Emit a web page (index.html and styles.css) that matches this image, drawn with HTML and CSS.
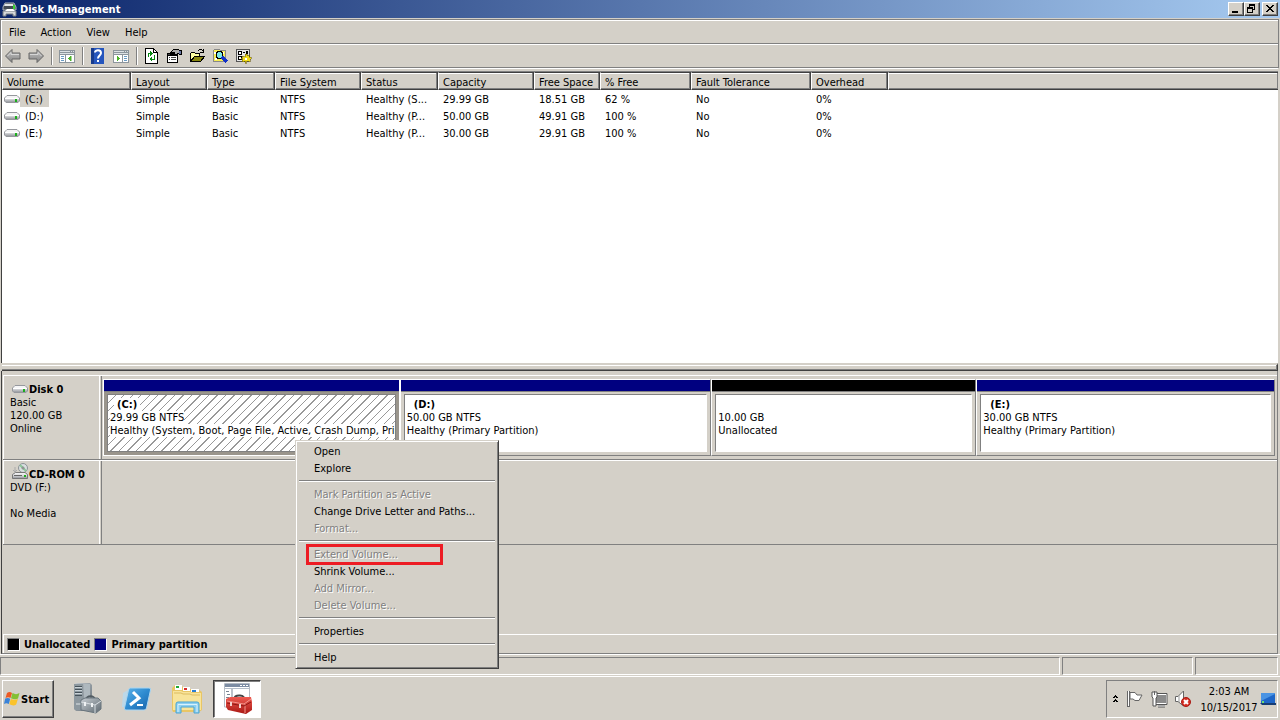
FILE: index.html
```html
<!DOCTYPE html>
<html lang="en">
<head>
<meta charset="utf-8">
<meta name="viewport" content="width=device-width, initial-scale=1">
<title>Disk Management</title>
<link rel="stylesheet" href="styles.css">
</head>
<body>
<svg class="defs" width="0" height="0" aria-hidden="true">
  <defs>
    <linearGradient id="metal" x1="0" y1="0" x2="0" y2="1"><stop offset="0" stop-color="#fafafa"/><stop offset=".5" stop-color="#d8d9dc"/><stop offset="1" stop-color="#8d9096"/></linearGradient>
    <linearGradient id="steel" x1="0" y1="0" x2="1" y2="1"><stop offset="0" stop-color="#c8ced3"/><stop offset="1" stop-color="#5d6870"/></linearGradient>
    <linearGradient id="arrow" x1="0" y1="0" x2="0" y2="1"><stop offset="0" stop-color="#c4c4c4"/><stop offset="1" stop-color="#858585"/></linearGradient>
    <linearGradient id="blue" x1="0" y1="0" x2="1" y2="1"><stop offset="0" stop-color="#5fb4ea"/><stop offset=".5" stop-color="#2e8bd0"/><stop offset="1" stop-color="#1a62a8"/></linearGradient>
    <linearGradient id="red" x1="0" y1="0" x2="0" y2="1"><stop offset="0" stop-color="#ee5a50"/><stop offset="1" stop-color="#a81612"/></linearGradient>
    <symbol id="drive" viewBox="0 0 16 10">
      <path d="M3 1.500H13L15.500 4V7L14 8.500H2L.5 7V4Z" fill="url(#metal)" stroke="#96989d"/>
      <path d="M3.500 2H12.500L14.500 4H1.500Z" fill="#f5f5f6"/>
      <path d="M1 4.500H15" stroke="#fff"/><rect x="11" y="5" width="2" height="3" fill="#1cae1c"/>
    </symbol>
  </defs>
</svg>

<main class="window">
  <header class="titlebar">
    <svg width="17" height="17" viewBox="0 0 17 17" aria-hidden="true"><path d="M4 2H13L15 6V9H2V6Z" fill="#444b54" stroke="#aeb4ba"/><path d="M4 3H12L13 5H3Z" fill="#e3e6e8"/><rect x="12" y="4" width="2" height="4" fill="#38d233"/><path d="M2 10H15V15H12V13H5V15H2Z" fill="#d4d7da" stroke="#777d84"/><path d="M4 10L6 8H12L14 10" fill="#fff"/></svg>
    <h1 class="title">Disk Management</h1>
    <div class="winbuttons">
      <button class="winbtn" aria-label="Minimize"><svg width="12" height="10"><path d="M2 7H8V9H2Z"/></svg></button>
      <button class="winbtn" aria-label="Restore"><svg width="12" height="10" shape-rendering="crispEdges"><path fill-rule="evenodd" d="M3 0H9V6H7V5H8V2H4V3H3Z M1 3H7V9H1Z M2 5V8H6V5Z"/></svg></button>
      <button class="winbtn close" aria-label="Close"><svg width="12" height="10" shape-rendering="crispEdges"><path d="M2 1H4V2H5V3H7V2H8V1H10V2H9V3H8V4H7V5H8V6H9V7H10V8H8V7H7V6H5V7H4V8H2V7H3V6H4V5H5V4H4V3H3V2H2Z"/></svg></button>
    </div>
  </header>

  <nav class="bar menubar" aria-label="Menu">
    <button>File</button><button>Action</button><button>View</button><button>Help</button>
  </nav>

  <div class="bar toolbar" role="toolbar" aria-label="Tools">
    <button class="tool" aria-label="Back"><svg width="18" height="16"><path d="M1.500 8L8 1.500V5H16V11H8V14.500Z" fill="url(#arrow)" stroke="#666"/><path d="M3.500 8L7 4.500V6.500H15" fill="none" stroke="#d6d6d6"/></svg></button>
    <button class="tool" aria-label="Forward"><svg width="18" height="16"><path d="M16.500 8L10 1.500V5H2V11H10V14.500Z" fill="url(#arrow)" stroke="#666"/><path d="M3 6.500H11V4.500L14.500 8" fill="none" stroke="#d6d6d6"/></svg></button>
    <span class="divider"></span>
    <button class="tool" aria-label="Show or hide console tree"><svg width="18" height="16" shape-rendering="crispEdges"><path d="M1 2H17V15H1Z" fill="#8c959c"/><path d="M2 3H12V4H2ZM13 3H14V4H13ZM15 3H16V4H15ZM2 5H16V6H2Z" fill="#dce1e4"/><path d="M2 7H7V14H2ZM8 7H16V14H8Z" fill="#fff"/><path d="M3 8H6V9H3ZM3 10H6V11H3ZM3 12H6V13H3Z" fill="#6a9bc4"/><path d="M13 8V13L10 10.500Z" fill="#4db32b" stroke="#4db32b" stroke-width=".5"/></svg></button>
    <span class="divider"></span>
    <button class="tool" aria-label="Help"><svg width="16" height="18"><rect x="2" y="1" width="13" height="16" fill="#2656bd"/><path d="M2 1H5V17H2Z" fill="#173b8d"/><path d="M6 5.500C6 2.500 12 2.500 12 6C12 8.500 9 8.500 9 11.500" fill="none" stroke="#fff" stroke-width="2"/><rect x="8" y="13" width="2" height="2" fill="#fff"/></svg></button>
    <button class="tool" aria-label="Show or hide action pane"><svg width="18" height="16" shape-rendering="crispEdges"><path d="M1 2H17V15H1Z" fill="#8c959c"/><path d="M2 3H12V4H2ZM13 3H14V4H13ZM15 3H16V4H15ZM2 5H16V6H2Z" fill="#dce1e4"/><path d="M2 7H10V14H2ZM11 7H16V14H11Z" fill="#fff"/><path d="M12 8H15V9H12ZM12 10H15V11H12ZM12 12H15V13H12Z" fill="#6a9bc4"/><path d="M5 8V13L8 10.500Z" fill="#4db32b" stroke="#4db32b" stroke-width=".5"/></svg></button>
    <span class="divider"></span>
    <button class="tool" aria-label="Refresh"><svg width="16" height="16" shape-rendering="crispEdges"><path d="M2.500.5H10.500L14.500 4.500V15.500H2.500Z" fill="#fff" stroke="#000"/><path d="M10.500.5V4.500H14.500" fill="none" stroke="#000"/><path d="M5 9V5H7V3L10 6L7 8V6H6V9ZM12 7V12H9V14L6 11L9 9V11H11V7Z" fill="#078a12"/></svg></button>
    <button class="tool" aria-label="Properties"><svg width="16" height="16" shape-rendering="crispEdges"><path d="M1 5H12V15H1Z"/><path d="M2 8H11V14H2Z" fill="#fff"/><path d="M3 9H4V10H3ZM5 9H10V10H5ZM3 11H4V12H3ZM5 11H10V12H5ZM2 6H4V7H2Z" fill="#444"/><path d="M4 5V4L8 1H12L13 2H16V7H13L12 6L9 8L7 6Z"/><path d="M5 4L8 2H12L13 3V5L9 6L8 5L10 4H6Z" fill="#aaa"/><path d="M13 3H15V6H13Z" fill="#6977a5"/></svg></button>
    <button class="tool" aria-label="Open"><svg width="16" height="16" shape-rendering="crispEdges"><path d="M1.500 13.500V5.500L2.500 4.500H5.500L6.500 5.500H10.500V8.500" fill="#ffffa0" stroke="#000"/><path d="M1.500 13.500L5.500 8.500H15.500L11.500 13.500Z" fill="#87850f" stroke="#000"/><path d="M9 3L11 1L13 2L14 3M14 1V4H11" fill="none" stroke="#000"/></svg></button>
    <button class="tool" aria-label="Find"><svg width="16" height="16" shape-rendering="crispEdges"><path d="M1.500 13.500V2.500L2.500 1.500H7.500L8.500 2.500H13.500V13.500Z" fill="#f8ee55" stroke="#888"/><path d="M2 4H4V6H2ZM10 4H12V6H10ZM3 10H5V12H3Z" fill="#fff"/><circle cx="7.500" cy="7" r="3.500" fill="#7ce5e8" stroke="#000"/><path d="M10 9L15 14" stroke="#1232c8" stroke-width="3"/></svg></button>
    <button class="tool" aria-label="Settings"><svg width="17" height="16" shape-rendering="crispEdges"><path d="M1.500 1.500H14.500V13.500H1.500Z" fill="#e6e6e6" stroke="#555"/><path d="M3.500 3.500H6.500V6.500H3.500ZM3.500 8.500H6.500V11.500H3.500Z" fill="#fff" stroke="#000"/><path d="M8 4H10V5H8ZM11 3H13V6H11ZM8 9H9V11H8Z"/><path d="M10 6H12V8L14 7V9H16V11H15V14L12 13L11 16L10 13L7 14L8 11H6V10H8L7 8L10 9Z" fill="#f0dc1a" stroke="#604f00" stroke-width=".5"/><path d="M10 10H12V12H10Z" fill="#fff"/></svg></button>
  </div>

  <section class="volumes" aria-label="Volumes">
    <table>
      <colgroup><col class="c-volume"><col class="c-layout"><col class="c-type"><col class="c-fs"><col class="c-status"><col class="c-cap"><col class="c-free"><col class="c-pct"><col class="c-fault"><col class="c-over"><col></colgroup>
      <thead><tr><th>Volume</th><th>Layout</th><th>Type</th><th>File System</th><th>Status</th><th>Capacity</th><th>Free Space</th><th>% Free</th><th>Fault Tolerance</th><th>Overhead</th><th class="rest"></th></tr></thead>
      <tbody>
        <tr><td class="name"><svg width="16" height="10"><use href="#drive"/></svg><span class="vol selected">(C:)</span></td><td>Simple</td><td>Basic</td><td>NTFS</td><td>Healthy (S...</td><td>29.99 GB</td><td>18.51 GB</td><td>62 %</td><td>No</td><td>0%</td><td></td></tr>
        <tr><td class="name"><svg width="16" height="10"><use href="#drive"/></svg><span class="vol">(D:)</span></td><td>Simple</td><td>Basic</td><td>NTFS</td><td>Healthy (P...</td><td>50.00 GB</td><td>49.91 GB</td><td>100 %</td><td>No</td><td>0%</td><td></td></tr>
        <tr><td class="name"><svg width="16" height="10"><use href="#drive"/></svg><span class="vol">(E:)</span></td><td>Simple</td><td>Basic</td><td>NTFS</td><td>Healthy (P...</td><td>30.00 GB</td><td>29.91 GB</td><td>100 %</td><td>No</td><td>0%</td><td></td></tr>
      </tbody>
    </table>
  </section>
  <div class="splitter"></div>

  <section class="graphical" aria-label="Disks">
    <article class="disk">
      <div class="disk-label">
        <h2><svg width="16" height="10"><use href="#drive"/></svg>Disk 0</h2>
        <p>Basic</p><p>120.00 GB</p><p>Online</p>
      </div>
      <div class="parts">
        <div class="part part-c chosen"><div class="stripe"></div><div class="info"><h3>(C:)</h3><p>29.99 GB NTFS</p><p>Healthy (System, Boot, Page File, Active, Crash Dump, Prim</p></div></div>
        <div class="part part-d"><div class="stripe"></div><div class="info"><h3>(D:)</h3><p>50.00 GB NTFS</p><p>Healthy (Primary Partition)</p></div></div>
        <div class="part part-free"><div class="stripe free"></div><div class="info"><h3></h3><p>10.00 GB</p><p>Unallocated</p></div></div>
        <div class="part part-e"><div class="stripe"></div><div class="info"><h3>(E:)</h3><p>30.00 GB NTFS</p><p>Healthy (Primary Partition)</p></div></div>
      </div>
    </article>
    <article class="disk">
      <div class="disk-label">
        <h2><svg width="16" height="16" viewBox="0 0 16 16"><circle cx="11" cy="5" r="4.500" fill="#d9dee0" stroke="#8c9296"/><path d="M11 5L8 2M11 5L14 8" stroke="#8cc79a" stroke-width="2"/><circle cx="11" cy="5" r="1" fill="#fff" stroke="#777"/><path d="M3.500 9.500H13L15.500 11.500V15.500H.5V11.500Z" fill="url(#metal)" stroke="#777"/><path d="M2 12.500H10" stroke="#666"/><rect x="12" y="12" width="2" height="2" fill="#1cae1c"/><path d="M3 4V9M1 7L3 9L5 7" stroke="#aaa" fill="none"/></svg>CD-ROM 0</h2>
        <p>DVD (F:)</p><p>&nbsp;</p><p>No Media</p>
      </div>
      <div class="parts"></div>
    </article>
    <div class="legend"><span class="swatch free"></span><span>Unallocated</span><span class="swatch"></span><span>Primary partition</span></div>
  </section>

  <footer class="status"><span class="pane main-pane"></span><span class="pane mid-pane"></span><span class="pane end-pane"></span></footer>
</main>

<div class="context" role="menu">
  <button role="menuitem">Open</button>
  <button role="menuitem">Explore</button>
  <hr>
  <button role="menuitem" disabled>Mark Partition as Active</button>
  <button role="menuitem">Change Drive Letter and Paths...</button>
  <button role="menuitem" disabled>Format...</button>
  <hr>
  <button role="menuitem" class="marked" disabled>Extend Volume...</button>
  <button role="menuitem">Shrink Volume...</button>
  <button role="menuitem" disabled>Add Mirror...</button>
  <button role="menuitem" disabled>Delete Volume...</button>
  <hr>
  <button role="menuitem">Properties</button>
  <hr>
  <button role="menuitem">Help</button>
</div>

<div class="taskbar">
  <button class="start"><svg width="16" height="16" viewBox="0 0 16 16" aria-hidden="true"><path d="M3 2C5 .5 6.500 1 8 2L6.500 7C5 6 3.500 6 1.500 7Z" fill="#ec5a24"/><path d="M8.500 2C11 3.500 13 3.500 15.500 2L14 7.500C12 8.500 10 8.500 7 7.300Z" fill="#84c034"/><path d="M1.200 7.500C3 6.700 4.500 6.700 6.200 7.700L4.800 13C3 12 1.500 12 0 13Z" fill="#3a83d8"/><path d="M6.800 8C9.500 9 11.500 9 13.900 8L12.200 13.500C10 15 8 14.500 5.300 13.300Z" fill="#fbc32b"/></svg>Start</button>
  <button class="task" aria-label="Server Manager"><svg width="32" height="34" viewBox="0 0 32 34"><path d="M3 2L6 1H19L21 3V27L18 29H5L3 27Z" fill="url(#steel)"/><path d="M3 2H12V28H5L3 27Z" fill="#8d989f"/><path d="M4 4.500H11M4 7.500H11M4 10.500H11M4 13.500H11" stroke="#46525a"/><path d="M4 5.500H11M4 8.500H11M4 11.500H11" stroke="#c9d2d7"/><path d="M13 2H19V27H13Z" fill="#aeb8be"/><path d="M5 22H10" stroke="#dfe5e8"/><path d="M15 18C15 13 24 13 24 18" fill="none" stroke="#525b62" stroke-width="2"/><path d="M10 18L14 16H27L30 19V27L25 31L10 28Z" fill="url(#steel)" stroke="#68747c"/><path d="M10 20L24 23L30 19M24 23V31" fill="none" stroke="#d7dde1"/><path d="M14 20V24M21 21V25" stroke="#eef1f3" stroke-width="2"/></svg></button>
  <button class="task" aria-label="PowerShell"><svg width="32" height="28" viewBox="0 0 32 28"><path d="M2 8L7 5L4 22H1Z" fill="#bcd8e8"/><path d="M9.500 3H28Q30 3 29.500 5L25.500 23Q25 25 23 25H5Q3 25 3.500 23L7.500 5Q8 3 9.500 3Z" fill="url(#blue)" stroke="#a9d6f2"/><path d="M12 7L18 13L9 20" fill="none" stroke="#fff" stroke-width="3"/><path d="M16 20H22" stroke="#fff" stroke-width="2"/></svg></button>
  <button class="task" aria-label="Windows Explorer"><svg width="34" height="32" viewBox="0 0 34 32"><path d="M2 5L5 2H11L13 4H17L19 6H28L32 9V27L29 29H3L2 27Z" fill="#e9c665"/><path d="M5 2H12V7H5Z" fill="#fff"/><path d="M6 3H9V5H6Z" fill="#20a935"/><path d="M13 4H20V8H13Z" fill="#fff"/><path d="M14 5H17V7H14Z" fill="#d52c2c"/><path d="M21 6H29V9H21Z" fill="#fff"/><path d="M22 7H26V9H22Z" fill="#2a7ed2"/><path d="M3 8H11L13 9H20L22 10H31V27H3Z" fill="#f8e49a"/><path d="M4 10H11L13 11H20L22 12H30" fill="none" stroke="#dcbc61"/><path d="M6 30V21Q6 19 8 19H27Q29 19 29 21V30H24V24H11V30Z" fill="#8dcff0" stroke="#4ba4d2"/><path d="M8 29V21.500H27V29" fill="none" stroke="#d8f2fd"/></svg></button>
  <button class="task active" aria-label="Disk Management"><svg width="34" height="34" viewBox="0 0 34 34"><path d="M4.500 1.500H29.500V25H4.500Z" fill="#fff" stroke="#b4bbc4"/><path d="M5 2H29V5H5Z" fill="#7c8ca3"/><path d="M5 6.500H29" stroke="#b4bdc9"/><path d="M20 3.500H22M23 3.500H25M26 3.500H28" stroke="#fff"/><path d="M6 9.500H9M7 12.500H10M6 15.500H9M12 7V20" stroke="#788493"/><path d="M14 18Q14 13 20 13.500Q25 14 24 18" fill="none" stroke="#444" stroke-width="2"/><path d="M6 17L10 15H31L32 20V28L26 32L8 28L6 25Z" fill="url(#red)"/><path d="M7 19L24 22L31 17M25 22V31" fill="none" stroke="#f3948b"/><path d="M7 21L24 24L31 20" fill="none" stroke="#8f1713"/><path d="M11 20V24M20 22V26" stroke="#f3d3cf" stroke-width="2"/></svg></button>
  <div class="tray">
    <button aria-label="Show hidden icons"><svg width="8" height="10" shape-rendering="crispEdges"><path d="M3 1H4V2H5V3H6V4H4V3H3V4H1V3H2V2H3ZM3 5H4V6H5V7H6V8H4V7H3V8H1V7H2V6H3Z"/></svg></button>
    <button class="tray-icon" aria-label="Action Center"><svg width="18" height="18"><path d="M2.500 1V17" stroke="#666" stroke-width="3"/><path d="M2.500 1V16" stroke="#fff"/><path d="M4 2.500H9L11 5H16L13 10.500H9L7 9H4Z" fill="#fff" stroke="#666"/></svg></button>
    <button class="tray-icon" aria-label="Network"><svg width="18" height="18"><path d="M5 4.500H16.500V13.500H5Z" fill="#8b8b8b" stroke="#fff"/><path d="M4.500 3.500H17V14.500H4.500Z" fill="none" stroke="#555"/><path d="M8 16H15" stroke="#555" stroke-width="3"/><path d="M8 16H15" stroke="#fff"/><path d="M2 2H7V7L6 8V16H3V8L2 7Z" fill="#fff" stroke="#555"/><path d="M4.500 1V5" stroke="#666"/></svg></button>
    <button class="tray-icon" aria-label="Volume muted"><svg width="18" height="18"><path d="M1.500 6.500H4L9.500 1V16L4 11.500H1.500Z" fill="#fff" stroke="#666"/><path d="M5 6V12" stroke="#999"/><circle cx="12" cy="12" r="4.500" fill="#d62d22" stroke="#a91b15"/><path d="M10 10L14 14M14 10L10 14" stroke="#fff" stroke-width="2"/></svg></button>
    <div class="clock"><span>2:03 AM</span><span>10/15/2017</span></div>
    <button aria-label="Show desktop"><svg width="16" height="14"><path d="M1 1H15V11H1Z" fill="#1e66c8"/><path d="M1 9L15 2V1H1Z" fill="#4a94e4"/><path d="M0 11H16V13H2Z" fill="#173d74"/><rect x="2" y="9" width="2" height="2" fill="#6be073"/></svg></button>
  </div>
</div>
</body>
</html>
```
FILE: styles.css
```css
:root {
  --face: #d4d0c8;
  --shade: #808080;
  --dark: #404040;
  --navy: #000080;
}
*, *::after { box-sizing: border-box; }
body {
  margin: 0;
  height: 100vh;
  display: flex;
  flex-direction: column;
  position: relative;
  overflow: hidden;
  background: var(--face);
  color: #000;
  font: 11px/13px Tahoma, "DejaVu Sans Condensed", "DejaVu Sans", sans-serif;
}
button { font: inherit; color: inherit; background: none; border: 0; padding: 0; margin: 0; }
svg { display: block; flex: none; }
h1, h2, h3, p { margin: 0; font-size: inherit; }
.defs { position: absolute; }

.window { flex: 1; min-height: 0; display: flex; flex-direction: column; }
.titlebar {
  height: 18px;
  display: flex;
  align-items: center;
  gap: 2px;
  padding: 0 2px 0 1px;
  background: linear-gradient(90deg, #0a246a, #a6caf0);
}
.title { flex: 1; color: #fff; }
.winbuttons { display: flex; }
.winbtn {
  width: 16px;
  height: 14px;
  padding: 1px;
  background: var(--face);
  border: 1px solid;
  border-color: #fff var(--dark) var(--dark) #fff;
  box-shadow: inset -1px -1px var(--shade);
}
.close { margin-left: 2px; }

.bar {
  display: flex;
  align-items: center;
  height: 25px;
  margin-right: 1px;
  border: 1px solid var(--shade);
  border-bottom: 0;
  box-shadow: inset 1px 1px #fff;
}
.menubar { margin-top: 1px; height: 24px; padding: 1px 0 0 8px; gap: 15px; }
.toolbar { padding-left: 3px; border-bottom: 1px solid var(--shade); }
.tool { width: 23px; display: flex; justify-content: flex-start; }
.divider { width: 2px; height: 18px; margin: 0 5px 0 1px; border-left: 1px solid var(--shade); border-right: 1px solid #fff; }

.volumes {
  flex: 1;
  min-height: 0;
  margin: 3px 2px 0 1px;
  border-top: 1px solid var(--shade);
  border-left: 1px solid var(--dark);
  background: #fff;
  box-shadow: 0 -2px var(--face), 0 -3px #fff;
}
table { width: 100%; table-layout: fixed; border-collapse: separate; border-spacing: 0; }
.c-volume { width: 129px; }
.c-layout { width: 76px; }
.c-type { width: 68px; }
.c-fs { width: 86px; }
.c-status { width: 77px; }
.c-cap { width: 96px; }
.c-free { width: 66px; }
.c-pct { width: 91px; }
.c-fault { width: 120px; }
.c-over { width: 77px; }
th {
  height: 18px;
  padding: 2px 0 0 4px;
  text-align: left;
  font-weight: normal;
  white-space: nowrap;
  background: var(--face);
  border: 1px solid;
  border-color: var(--dark) var(--dark) var(--dark) #fff;
  box-shadow: inset -1px -1px var(--shade), inset 0 1px #fff;
}
.rest { border-right: 0; }
td { height: 17px; padding: 2px 0 0 5px; white-space: nowrap; overflow: hidden; }
td.name { display: flex; align-items: center; padding: 0 0 0 2px; }
.vol { height: 17px; padding: 3px 6px 1px 5px; }
.selected { background: var(--face); }

.splitter {
  height: 8px;
  margin: 0 2px;
  border-top: 2px solid var(--face);
  border-right: 1px solid var(--dark);
  border-bottom: 1px solid var(--dark);
  box-shadow: inset -1px -1px var(--shade), inset 0 1px #fff;
}
.graphical {
  height: 283px;
  display: flex;
  flex-direction: column;
  margin: 0 2px 0 1px;
  padding-top: 4px;
  border-left: 1px solid var(--dark);
  border-right: 1px solid var(--shade);
  border-bottom: 1px solid var(--shade);
}
.disk {
  height: 85px;
  display: flex;
  margin-left: 1px;
  border-top: 1px solid #fff;
  border-bottom: 1px solid var(--shade);
}
.disk-label {
  width: 99px;
  flex: none;
  padding: 7px 0 0 6px;
  border-left: 1px solid #fff;
  border-right: 1px solid var(--shade);
  box-shadow: inset -1px 0 var(--face), inset -2px 0 #fff;
}
.disk-label h2 { display: flex; align-items: flex-end; height: 13px; padding-left: 2px; gap: 1px; }
.disk-label svg { margin-bottom: 2px; }
.parts { flex: 1; min-width: 0; display: flex; padding: 3px 2px 3px 1px; }
.part {
  flex: 1 1 0;
  min-width: 0;
  display: flex;
  flex-direction: column;
  border: 1px solid;
  border-color: #fff var(--shade) var(--shade) #fff;
}
.part-c { flex-grow: 297; }
.part-d { flex-grow: 312; }
.part-free { flex-grow: 265; }
.part-e { flex-grow: 299; }
.stripe { height: 12px; background: var(--navy); border-bottom: 1px solid var(--shade); }
.stripe.free { background: #000; }
.info {
  flex: 1;
  margin: 2px 3px 3px;
  padding: 3px 0 0 2px;
  overflow: hidden;
  white-space: nowrap;
  background: #fff;
  border: 1px solid;
  border-color: var(--shade) #fff #fff var(--shade);
}
.info h3 { height: 13px; padding-left: 7px; }
.chosen { background: #9a958c; border-right-color: #fff; border-bottom-color: #fff; }
.chosen .info { background: repeating-linear-gradient(135deg, #fff 0 5px, #999 5px 6px); border-color: var(--shade); }
.chosen h3, .chosen p { width: max-content; background: #fff; }
.chosen h3 { margin-left: 4px; padding: 0 3px; }
.legend {
  height: 19px;
  margin: auto 0 0 1px;
  padding-left: 3px;
  display: flex;
  align-items: center;
  gap: 4px;
  border-top: 1px solid #fff;
  border-left: 1px solid #fff;
  font-weight: bold;
}
.swatch { width: 13px; height: 13px; background: var(--navy); border: 1px solid; border-color: var(--shade) #fff #fff var(--shade); }
.swatch.free { background: #000; }

.status { height: 22px; display: flex; gap: 2px; padding: 2px 2px 1px 0; border-top: 1px solid #fff; }
.pane { border: 1px solid; border-color: var(--shade) #fff #fff var(--shade); }
.main-pane { flex: 1; }
.mid-pane { width: 131px; }
.end-pane { width: 83px; }

.taskbar { height: 44px; display: flex; gap: 2px; padding: 3px 2px 2px; border-top: 1px solid #fff; }
.start {
  width: 52px;
  height: 38px;
  display: flex;
  align-items: center;
  gap: 1px;
  padding-left: 1px;
  font-weight: bold;
  border: 1px solid;
  border-color: #fff var(--dark) var(--dark) #fff;
  box-shadow: inset -1px -1px var(--shade);
}
.task { width: 48px; height: 38px; display: flex; align-items: center; justify-content: center; }
.start + .task { margin-left: 7px; }
.task.active { background: #fff; border: 1px solid; border-color: var(--dark) #fff #fff var(--dark); box-shadow: inset 1px 1px var(--shade); }
.tray {
  width: 172px;
  height: 38px;
  margin-left: auto;
  padding: 0 1px 0 5px;
  display: flex;
  align-items: center;
  border: 1px solid;
  border-color: var(--shade) #fff #fff var(--shade);
}
.tray-icon { margin-left: 6px; }
.clock { flex: 1; display: flex; flex-direction: column; gap: 3px; padding-left: 6px; text-align: center; white-space: nowrap; }

.context {
  position: absolute;
  left: 295px;
  top: 440px;
  width: 204px;
  padding: 2px 3px;
  background: var(--face);
  border: 1px solid;
  border-color: var(--face) var(--dark) var(--dark) var(--face);
  box-shadow: inset 1px 1px #fff, inset -1px -1px var(--shade);
}
.context button { display: block; position: relative; width: 100%; height: 17px; padding-left: 15px; text-align: left; white-space: nowrap; }
.context button:disabled { color: var(--shade); text-shadow: 1px 1px #fff; }
.context hr { height: 2px; margin: 3px 0 4px; border: 0; border-top: 1px solid var(--shade); border-bottom: 1px solid #fff; }
.marked::after { content: ""; position: absolute; left: 7px; top: -2px; width: 137px; height: 21px; border: 3px solid #ed1c24; }
```
